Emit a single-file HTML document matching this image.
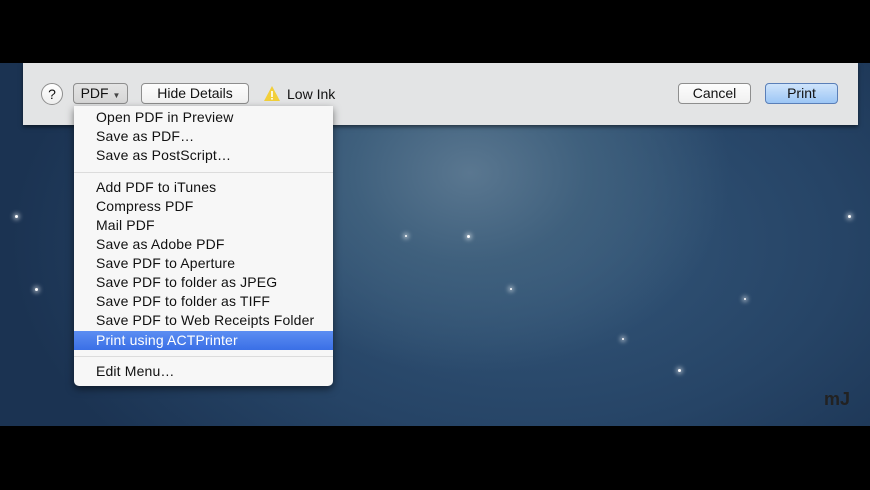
<!DOCTYPE html>
<html><head><style>
*{margin:0;padding:0;box-sizing:border-box}
body{width:870px;height:490px;background:#000;position:relative;overflow:hidden;font-family:"Liberation Sans","DejaVu Sans",sans-serif;font-size:14px;color:#111}
#bg{position:absolute;left:0;top:63px;width:870px;height:363px;
background:radial-gradient(ellipse 260px 200px at 470px 110px,#5a7790 0%,#3f607d 45%,rgba(40,70,100,0) 100%),
radial-gradient(ellipse 520px 320px at 530px 180px,#34577a 0%,#264466 60%,#1b3352 100%),#1a3150;}
.star{position:absolute;width:3px;height:3px;border-radius:50%;background:#fff;box-shadow:0 0 4px 2px rgba(255,255,255,.5)}
#sheet{position:absolute;left:23px;top:63px;width:835px;height:62px;background:#e3e4e5;box-shadow:0 2px 4px rgba(0,0,0,.5)}
.btn{position:absolute;height:21px;border:1px solid #8e8e8e;border-radius:4px;background:linear-gradient(#fdfdfd,#f0f0f0);text-align:center;line-height:19px;font-size:14px}
#menu{position:absolute;left:74px;top:106px;width:259px;height:280px;background:#f7f7f7;border-radius:0 0 5px 5px;box-shadow:0 3px 8px rgba(0,0,0,.5)}
.it{position:absolute;left:22px;height:19px;line-height:19px;white-space:nowrap;letter-spacing:0.15px}
.sep{position:absolute;left:0;width:259px;height:1px;background:#dcdcdc}
</style></head><body>
<div id="bg">
<div class="star" style="left:15px;top:152px"></div>
<div class="star" style="left:35px;top:225px"></div>
<div class="star" style="left:467px;top:172px"></div>
<div class="star" style="left:848px;top:152px"></div>
<div class="star" style="left:678px;top:306px"></div>
<div class="star" style="left:510px;top:225px;width:2px;height:2px"></div>
<div class="star" style="left:405px;top:172px;width:2px;height:2px"></div>
<div class="star" style="left:744px;top:235px;width:2px;height:2px"></div>
<div class="star" style="left:622px;top:275px;width:2px;height:2px"></div>
<div style="position:absolute;left:824px;top:326px;color:#222;font-size:18px;font-weight:bold">mJ</div>
</div>
<div id="sheet">
<div style="position:absolute;left:18px;top:20px;width:22px;height:22px;border-radius:50%;border:1px solid #8e8e8e;background:linear-gradient(#fff,#eee);text-align:center;line-height:20px;font-size:14px">?</div>
<div class="btn" style="left:50px;top:20px;width:55px;background:linear-gradient(#e4e4e4,#d6d6d6)">PDF <span style="font-size:8px;color:#444">▼</span></div>
<div class="btn" style="left:118px;top:20px;width:108px">Hide Details</div>
<svg style="position:absolute;left:240px;top:22px" width="18" height="17"><path d="M9 1 L17 16 L1 16 Z" fill="#f2cf3a"/><rect x="8.2" y="6" width="1.6" height="6" fill="#fff"/><rect x="8.2" y="13" width="1.6" height="1.6" fill="#fff"/></svg>
<div style="position:absolute;left:264px;top:22px;line-height:18px">Low Ink</div>
<div class="btn" style="left:655px;top:20px;width:73px">Cancel</div>
<div class="btn" style="left:742px;top:20px;width:73px;border-color:#5a7fb8;background:linear-gradient(#cfe4fb,#9cc6f5)">Print</div>
</div>
<div id="menu">
<div class="it" style="top:2px">Open PDF in Preview</div>
<div class="it" style="top:21px">Save as PDF…</div>
<div class="it" style="top:40px">Save as PostScript…</div>
<div class="sep" style="top:66px"></div>
<div class="it" style="top:72px">Add PDF to iTunes</div>
<div class="it" style="top:91px">Compress PDF</div>
<div class="it" style="top:110px">Mail PDF</div>
<div class="it" style="top:129px">Save as Adobe PDF</div>
<div class="it" style="top:148px">Save PDF to Aperture</div>
<div class="it" style="top:167px">Save PDF to folder as JPEG</div>
<div class="it" style="top:186px">Save PDF to folder as TIFF</div>
<div class="it" style="top:205px">Save PDF to Web Receipts Folder</div>
<div style="position:absolute;left:0;top:225px;width:259px;height:19px;background:linear-gradient(#5c8ef2,#3a6fe6)"></div>
<div class="it" style="top:225px;color:#fff">Print using ACTPrinter</div>
<div class="sep" style="top:250px"></div>
<div class="it" style="top:256px">Edit Menu…</div>
</div>
</body></html>
